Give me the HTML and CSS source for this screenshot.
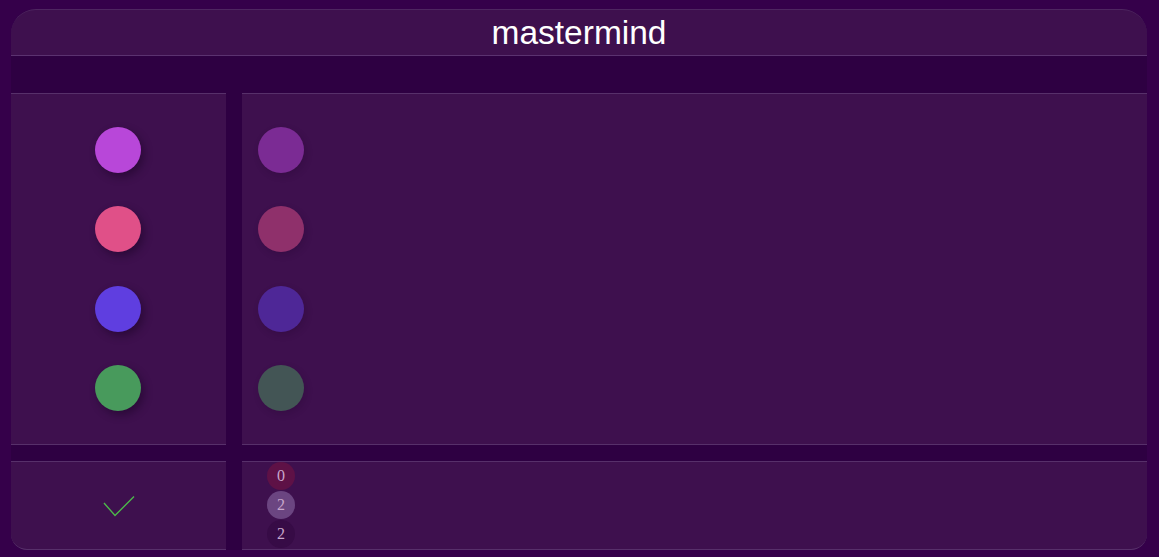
FILE: index.html
```html
<!DOCTYPE html>
<html>
<head>
<meta charset="utf-8">
<link rel="stylesheet" href="styles.css">
</head>
<body>
<div class="board">
  <header class="head"><h1 class="title">mastermind</h1></header>
  <div class="spacer"></div>
  <div class="row main">
    <div class="panel palette">
      <div class="peg purple"></div>
      <div class="peg pink"></div>
      <div class="peg blue"></div>
      <div class="peg green"></div>
    </div>
    <div class="panel guesses">
      <div class="peg purple dim"></div>
      <div class="peg pink dim"></div>
      <div class="peg blue dim"></div>
      <div class="peg green dim"></div>
    </div>
  </div>
  <div class="row bottom">
    <div class="panel check-cell">
      <svg class="check" width="40" height="30" viewBox="0 0 40 30">
        <polyline points="3,8 14,20.5 33,1.5" fill="none" stroke="#4cb84a" stroke-width="1.4"/>
      </svg>
    </div>
    <div class="panel scores">
      <div class="score red">0</div>
      <div class="score grey">2</div>
      <div class="score dark">2</div>
    </div>
  </div>
</div>
</body>
</html>
```
FILE: styles.css
```css
html, body {
  margin: 0;
  height: 100%;
}
body {
  background: #35004a;
  padding: 9px 12px 0 11px;
  box-sizing: border-box;
  font-family: "Liberation Sans", Arial, sans-serif;
}
.board {
  background: #2e0042;
  border-radius: 25px 25px 16px 16px;
  display: flex;
  flex-direction: column;
}
.head {
  background: #3e104e;
  height: 45px;
  border-top: 1px solid #4e2560;
  border-bottom: 1px solid #5b3270;
  border-radius: 25px 25px 0 0;
  display: flex;
  align-items: center;
  justify-content: center;
}
.title {
  margin: 0;
  font-weight: normal;
  font-size: 33.5px;
  line-height: 44px;
  color: #ffffff;
  padding-top: 1px;
}
.spacer {
  height: 37px;
}
.row {
  display: grid;
  grid-template-columns: 215px 905px;
  column-gap: 16px;
}
.panel {
  background: #3e104e;
  border-top: 1px solid #57306a;
  border-bottom: 1px solid #57306a;
}
.main .panel {
  height: 352px;
  box-sizing: border-box;
  padding-top: 33px;
}
.palette {
  display: flex;
  flex-direction: column;
  align-items: center;
  gap: 33.33px;
  padding-right: 2px;
}
.guesses {
  display: flex;
  flex-direction: column;
  align-items: flex-start;
  gap: 33.33px;
  padding-left: 16px;
}
.peg {
  width: 46px;
  height: 46px;
  border-radius: 50%;
  box-shadow: 3px 4px 8px rgba(20, 0, 30, 0.45);
}
.purple { background: #b847d9; }
.pink { background: #e05088; }
.blue { background: #5f3ee0; }
.green { background: #489a5c; }
.dim {
  opacity: 0.5;
  box-shadow: 2px 3px 6px rgba(20, 0, 30, 0.3);
}
.bottom {
  margin-top: 16px;
}
.bottom .panel {
  height: 87px;
}
.check-cell {
  border-radius: 0 0 0 16px;
  display: flex;
  align-items: center;
  justify-content: center;
}
.check {
  display: block;
  margin-left: 5px;
  margin-top: 8px;
}
.scores {
  border-radius: 0 0 16px 0;
  display: flex;
  flex-direction: column;
  gap: 1px;
  padding-left: 25px;
}
.score {
  width: 28px;
  height: 28px;
  border-radius: 50%;
  display: flex;
  align-items: center;
  justify-content: center;
  font-family: "Liberation Serif", "Times New Roman", serif;
  font-size: 16px;
  color: #c8a6cc;
}
.red { background: #5e1146; }
.grey { background: #6b4581; }
.dark { background: #370b46; }
```
